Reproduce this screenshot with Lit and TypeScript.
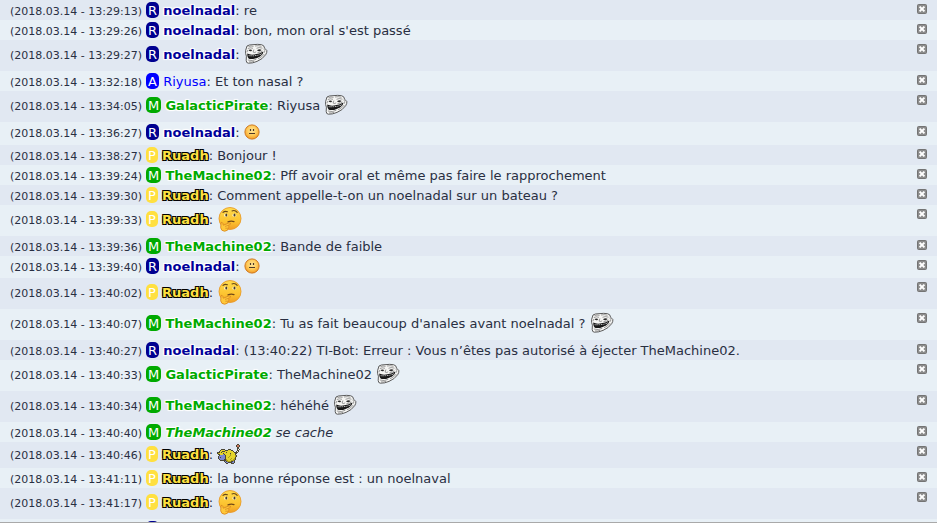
import { LitElement, html, css, svg, nothing } from "lit";
import { customElement } from "lit/decorators.js";

type Role = "r" | "a" | "m" | "p";
type Smiley = "troll" | "neutral" | "think" | "sheep";
interface Message {
  time: string;
  role: Role;
  name: string;
  text?: string;
  smiley?: Smiley;
  size?: "tall" | "medium" | "small" | "compact";
  action?: boolean;
}

const msg = (
  time: string, role: Role, name: string, text = "",
  smiley?: Smiley, size?: Message["size"], action = false,
): Message => ({ time, role, name, text, smiley, size, action });

const messages: Message[] = [
  msg("13:29:13", "r", "noelnadal", "re"),
  msg("13:29:26", "r", "noelnadal", "bon, mon oral s'est passé"),
  msg("13:29:27", "r", "noelnadal", "", "troll", "tall"),
  msg("13:32:18", "a", "Riyusa", "Et ton nasal ?"),
  msg("13:34:05", "m", "GalacticPirate", "Riyusa ", "troll", "tall"),
  msg("13:36:27", "r", "noelnadal", "", "neutral", "small"),
  msg("13:38:27", "p", "Ruadh", "Bonjour !"),
  msg("13:39:24", "m", "TheMachine02", "Pff avoir oral et même pas faire le rapprochement"),
  msg("13:39:30", "p", "Ruadh", "Comment appelle-t-on un noelnadal sur un bateau ?"),
  msg("13:39:33", "p", "Ruadh", "", "think", "tall"),
  msg("13:39:36", "m", "TheMachine02", "Bande de faible"),
  msg("13:39:40", "r", "noelnadal", "", "neutral", "compact"),
  msg("13:40:02", "p", "Ruadh", "", "think", "tall"),
  msg("13:40:07", "m", "TheMachine02", "Tu as fait beaucoup d'anales avant noelnadal ? ", "troll", "tall"),
  msg("13:40:27", "r", "noelnadal", "(13:40:22) TI-Bot: Erreur : Vous n’êtes pas autorisé à éjecter TheMachine02."),
  msg("13:40:33", "m", "GalacticPirate", "TheMachine02 ", "troll", "tall"),
  msg("13:40:34", "m", "TheMachine02", "héhéhé ", "troll", "tall"),
  msg("13:40:40", "m", "TheMachine02", "se cache", undefined, undefined, true),
  msg("13:40:46", "p", "Ruadh", "", "sheep", "medium"),
  msg("13:41:11", "p", "Ruadh", "la bonne réponse est : un noelnaval"),
  msg("13:41:17", "p", "Ruadh", "", "think", "tall"),
  msg("13:41:20", "r", "noelnadal"),
];

const sheepPixels = [
  "....................kk..",
  "...................kook.",
  "...................kook.",
  "....................kk..",
  "....................kk..",
  "....kkkk...kkk......kwk.",
  "...kyyyykkkyyykk....kk..",
  "..kyykkkyyyyyyyyk..kwk..",
  "kkkykyyyykyyyyyyykkkk...",
  "kdyyyykyyyyyykyyyykk....",
  ".kkyyybkyyyyydyyyyk.....",
  "..kbbbbbkyyyydyyyydk....",
  ".kbbbbbbkyyydyyyyydk....",
  ".kbkbbbbkyydyyyyyyk.....",
  ".kbbbbbbkyyyyydyydk.....",
  "..kbbbbkkdyyydyyddk.....",
  "...kkkkkkddyyydddk......",
  ".......kbkddddkkbk......",
  "........kbbkkkkbbk......",
  ".........kk...kkk.......",
];
const sheepColors: Record<string, string> = {
  k: "#4b4736", y: "#e4d52b", d: "#a99b20", b: "#7d89ce", o: "#cb765e", w: "#f5f0e5",
};

const smileys = {
  troll: () => html`<svg class="smiley" role="img" aria-label="troll" width="24" height="22" viewBox="0 0 24 22">
    <path d="M3 3Q5 1.6 9 1.7Q14 1 17.5 1.7Q20.3 2.2 20.6 5.2L22.8 7.5Q23.3 9 21.7 11.7Q18.5 16.2 13 18.4Q8.5 20.4 4.4 20.2Q2.3 20.2 2.2 17.5L2.4 13.2Q1.2 10.5 1.6 7.5Z" fill="#f6f6f4" stroke="#4a4a4a" stroke-width=".9"/>
    <path d="M4.5 3.6Q7 2.5 9.5 3.4M11 3Q14.5 2.2 17.5 3.3M3.8 5.6Q6.2 4.2 9 5.3M12.5 5.3Q15 3.9 18.5 5.2M3.2 9.2Q2.8 7.6 4 7M19.8 5.8Q21.5 7.5 20.4 9.6M9.9 6.5L9.1 9.1Q10.8 10.1 12.2 8.8M3.9 17Q8.5 18.6 12.4 16.2M14 15.8Q18 14.2 20.4 11M5 18.9Q8 19.3 10 18.4M13.5 9.6Q16.5 9.6 18.4 8" fill="none" stroke="#747474" stroke-width=".7"/>
    <path d="M4.4 7.1Q6.2 5.8 8.3 7L7.2 8.3Q5.4 8.5 4.4 7.1ZM13 7.2Q15.4 5.7 17.7 6.9L15.8 8.3Q14 8.6 13 7.2Z" fill="#2c2c2c"/>
    <path d="M3.2 10.6Q6.2 12 10 11.5Q15.5 11.1 19.4 8.6Q19.3 11.6 16 13.4Q11 16.3 5.6 16.1Q3.3 15.5 3.2 10.6Z" fill="#181818"/>
    <path d="M4.5 12.3L10 12.6Q14.7 12 18.3 10.2Q17.7 11.2 15.9 11.9Q11 13.6 4.9 13.3Z" fill="#e4e4e4"/>
    <path d="M6 12V15M8.2 12V15.3M10.5 12V15M12.8 11.7V14.4M15.1 11V13.5" stroke="#181818" stroke-width=".8"/>
  </svg>`,
  neutral: () => html`<svg class="smiley" role="img" aria-label="neutral" width="16" height="16" viewBox="0 0 16 16">
    <defs><radialGradient id="n" cx=".5" cy=".4" r=".6"><stop stop-color="#ffe59a"/><stop offset=".55" stop-color="#ffcb5a"/><stop offset="1" stop-color="#f39a20"/></radialGradient></defs>
    <circle cx="8" cy="8" r="7.1" fill="url(#n)" stroke="#cf7a22"/>
    <path d="M6.5 5V7M9.5 5V7" stroke="#4e3927" stroke-width="1.2"/>
    <path d="M5 9.5H11" stroke="#4e3927" stroke-width="1"/>
  </svg>`,
  think: () => html`<svg class="smiley" role="img" aria-label="thinking" width="25" height="26" viewBox="0 0 25 26">
    <defs><linearGradient id="t" x2="0" y2="1"><stop stop-color="#ffdc4d"/><stop offset=".65" stop-color="#fcc22f"/><stop offset="1" stop-color="#f19d26"/></linearGradient></defs>
    <circle cx="13" cy="12.5" r="11" fill="url(#t)" stroke="#e99b2a" stroke-width=".9"/>
    <path d="M6 6.4Q8 4.6 10.4 5.8M15 4.9Q18 3.7 20.2 6.3" fill="none" stroke="#684517" stroke-width="1.1" stroke-linecap="round"/>
    <ellipse cx="8.9" cy="9.2" rx="1.9" ry="1.6" fill="#fff3c0"/><ellipse cx="17.3" cy="9.2" rx="1.9" ry="1.6" fill="#fff3c0"/>
    <ellipse cx="9.3" cy="9" rx="1" ry="1.5" fill="#4e3b23"/><ellipse cx="17.5" cy="9" rx="1" ry="1.5" fill="#4e3b23"/>
    <path d="M11 15.9Q14 14.6 17 15.6" fill="none" stroke="#724817" stroke-width="1.2" stroke-linecap="round"/>
    <path d="M4 16.6Q5 15.6 5.8 17.2L6.3 19.2L11.8 17Q13.8 16.7 13.8 17.9Q13.5 18.5 11 19.4Q12.3 20.4 11.7 21.7Q11.2 25 7.6 25.2Q4.2 25.1 3.7 21.8Z" fill="#ffc83a" stroke="#db8b23" stroke-width=".9"/>
    <path d="M8 20.4L11 19.5M8.3 22.2H11.2" stroke="#db8b23" stroke-width=".8"/>
  </svg>`,
  sheep: () => html`<svg class="smiley" role="img" aria-label="mareep" width="24" height="20" viewBox="0 0 24 20" shape-rendering="crispEdges">
    ${sheepPixels.flatMap((line, y) => [...line].map((c, x) =>
      c === "." ? nothing : svg`<rect x=${x} y=${y} width="1" height="1" fill=${sheepColors[c]}></rect>`))}
  </svg>`,
};

@customElement("app-root")
export class AppRoot extends LitElement {
  static styles = css`
    :host {
      display: block;
      height: 100vh;
      box-sizing: border-box;
      overflow: hidden;
      border-bottom: 1px solid #a9a9a9;
      background: #e8f0f6;
      color: #292f42;
      font: 13px/20px Verdana, "DejaVu Sans", sans-serif;
    }
    .log { list-style: none; margin: 0; padding: 0; }
    .row {
      display: flex;
      justify-content: space-between;
      align-items: flex-start;
      box-sizing: border-box;
      height: 20px;
      padding: 0 10px;
      background: #e8f0f6;
    }
    .row:nth-child(odd) { background: #e1e8f2; }
    .row.tall { height: 31px; }
    .row.medium { height: 26px; }
    .row.small { height: 23px; }
    .row.compact { height: 22px; }
    .line { display: flex; align-items: center; height: 20px; white-space: pre; }
    .tall .line { margin-top: 4px; }
    .medium .line { margin-top: 2px; }
    .text { padding-top: 2px; }
    .time { font-size: 11px; }
    .badge {
      display: inline-block;
      padding: 1px 2px 0;
      border-radius: 5px;
      line-height: 15px;
      color: #fff;
    }
    .name { font-weight: bold; text-decoration: none; }
    .badge.r { background: #000090; }
    .badge.a { background: #0000ff; }
    .badge.m { background: #00aa00; }
    .badge.p { background: #ffe040; }
    .name.r { color: #000099; }
    .name.a { color: #0000ff; font-weight: normal; }
    .name.m { color: #00aa00; }
    .name.p { color: #ffe040; }
    .name.r, .name.m { text-shadow: 1px 1px 1px #fff, -1px -1px 1px #fff, 1px -1px 1px #fff, -1px 1px 1px #fff; }
    .name.p { text-shadow: 1px 1px 0 #000, -1px -1px 0 #000, 1px -1px 0 #000, -1px 1px 0 #000; }
    .action { font-style: italic; }
    .smiley { display: block; flex: none; }
    .close {
      display: block;
      flex: none;
      width: 10px;
      height: 10px;
      margin: 4px 0 0;
      padding: 0;
      border: 0;
      background: none;
      cursor: pointer;
    }
    .cross { display: block; }
  `;

  render() {
    return html`<ul class="log">${messages.map((m) => html`
      <li class="row ${m.size ?? ""}">
        <div class="line"><span class="text"><span class="time">(2018.03.14 - ${m.time})</span> <span class="badge ${m.role}">${m.role.toUpperCase()}</span> <span class=${m.action ? "action" : "said"}><a class="name ${m.role}" href="#">${m.name}</a>${m.action ? " " : ": "}${m.text}</span></span>${m.smiley ? smileys[m.smiley]() : nothing}</div>
        <button class="close" aria-label="Supprimer">
          <svg class="cross" width="10" height="10" viewBox="0 0 10 10">
            <rect x=".5" y=".5" width="9" height="9" rx="1" fill="#8c8c8c" stroke="#747474"/>
            <path d="M2.6 2.6L7.4 7.4M7.4 2.6L2.6 7.4" stroke="#fff" stroke-width="2"/>
          </svg>
        </button>
      </li>`)}</ul>`;
  }
}
